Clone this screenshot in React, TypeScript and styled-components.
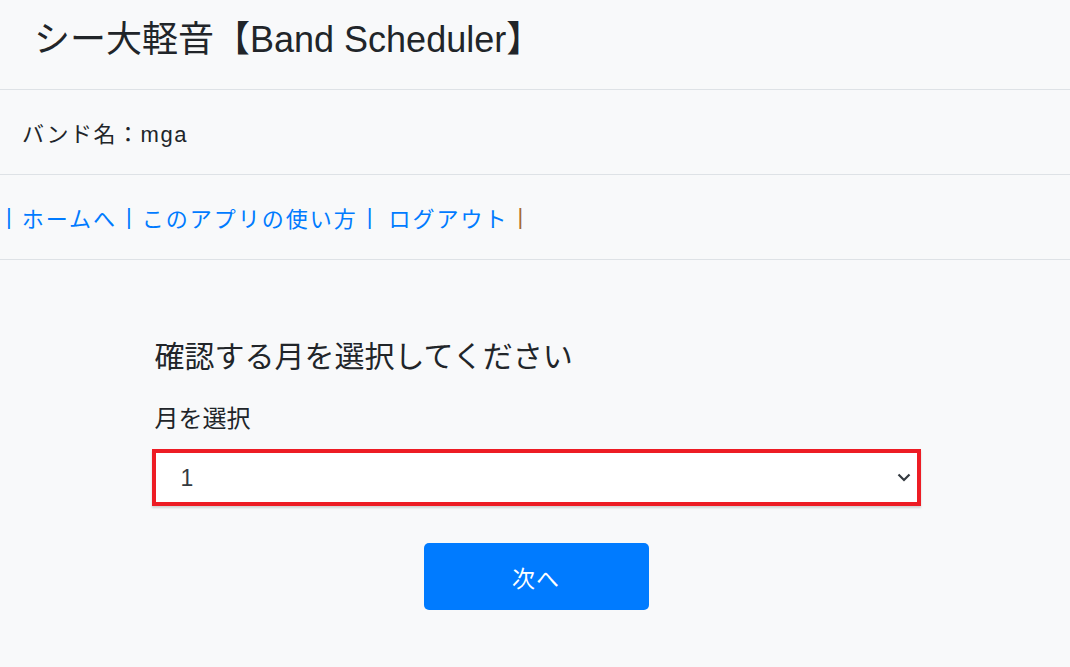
import styled, { createGlobalStyle } from "styled-components";

const GlobalStyle = createGlobalStyle`
  body {
    margin: 0;
    background: #f8f9fa;
    color: #212529;
    font-family: "Liberation Sans", "Noto Sans CJK JP", sans-serif;
  }
`;

const Header = styled.header`
  height: 90px;
  box-sizing: border-box;
  display: flex;
  align-items: center;
  padding: 0 0 10px 34px;
  border-bottom: 1px solid #dee2e6;
`;

const Title = styled.h1`
  margin: 0;
  font-size: 36px;
  font-weight: 400;
  line-height: 1.2;
`;

const Row = styled.div<{ $indent: number }>`
  height: 85px;
  box-sizing: border-box;
  display: flex;
  align-items: center;
  padding-left: ${(p) => p.$indent}px;
  border-bottom: 1px solid #dee2e6;
  font-size: 22px;
  letter-spacing: 1.5px;
`;

const NavLink = styled.a<{ $gap?: number }>`
  color: #007bff;
  text-decoration: none;
  letter-spacing: 2px;
  margin: 0 9px 0 ${(p) => p.$gap ?? 10}px;
`;

const Sep = styled.span<{ $color: string }>`
  color: ${(p) => p.$color};
  letter-spacing: 0;
`;

const Main = styled.main`
  width: 769px;
  margin: 0 auto;
  padding: 79px 0 0 2px;
`;

const Heading = styled.h3`
  margin: 0 0 0 3px;
  font-size: 30px;
  font-weight: 400;
  line-height: 1.2;
`;

const Label = styled.label`
  display: block;
  margin: 26px 0 12px 3px;
  font-size: 24px;
  line-height: 1.5;
`;

const SelectWrap = styled.div`
  position: relative;
`;

const Select = styled.select`
  display: block;
  width: 100%;
  height: 57px;
  box-sizing: border-box;
  padding: 0 25px;
  border: 4px solid #ed1c24;
  border-radius: 0;
  background: #fff;
  color: #343a40;
  font-family: inherit;
  font-size: 23px;
  appearance: none;
  box-shadow: 0 2px 2px rgba(0, 0, 0, 0.15);
  outline: none;
`;

const Chevron = styled.svg`
  position: absolute;
  right: 10px;
  top: 24px;
  pointer-events: none;
`;

const Actions = styled.div`
  display: flex;
  justify-content: center;
  padding-top: 37px;
`;

const Button = styled.button`
  width: 225px;
  height: 67px;
  border: none;
  border-radius: 5px;
  background: #007bff;
  color: #fff;
  font-family: inherit;
  font-size: 23px;
  letter-spacing: 1px;
  cursor: pointer;
`;

export default function App() {
  return (
    <>
      <GlobalStyle />
      <Header>
        <Title>シー大軽音【Band Scheduler】</Title>
      </Header>
      <Row $indent={22}>バンド名：mga</Row>
      <Row $indent={6}>
        <Sep $color="#007bff">|</Sep>
        <NavLink href="#">ホームへ</NavLink>
        <Sep $color="#007bff">|</Sep>
        <NavLink href="#">このアプリの使い方</NavLink>
        <Sep $color="#007bff">|</Sep>
        <NavLink href="#" $gap={16}>ログアウト</NavLink>
        <Sep $color="#a86a32">|</Sep>
      </Row>
      <Main>
        <Heading>確認する月を選択してください</Heading>
        <Label htmlFor="month">月を選択</Label>
        <SelectWrap>
          <Select id="month" defaultValue="1">
            {Array.from({ length: 12 }, (_, i) => (
              <option key={i} value={i + 1}>
                {i + 1}
              </option>
            ))}
          </Select>
          <Chevron width="14" height="9" viewBox="0 0 14 9">
            <path d="M1.5 1.5 L7 7 L12.5 1.5" fill="none" stroke="#343a40" strokeWidth="2.2" />
          </Chevron>
        </SelectWrap>
        <Actions>
          <Button>次へ</Button>
        </Actions>
      </Main>
    </>
  );
}
